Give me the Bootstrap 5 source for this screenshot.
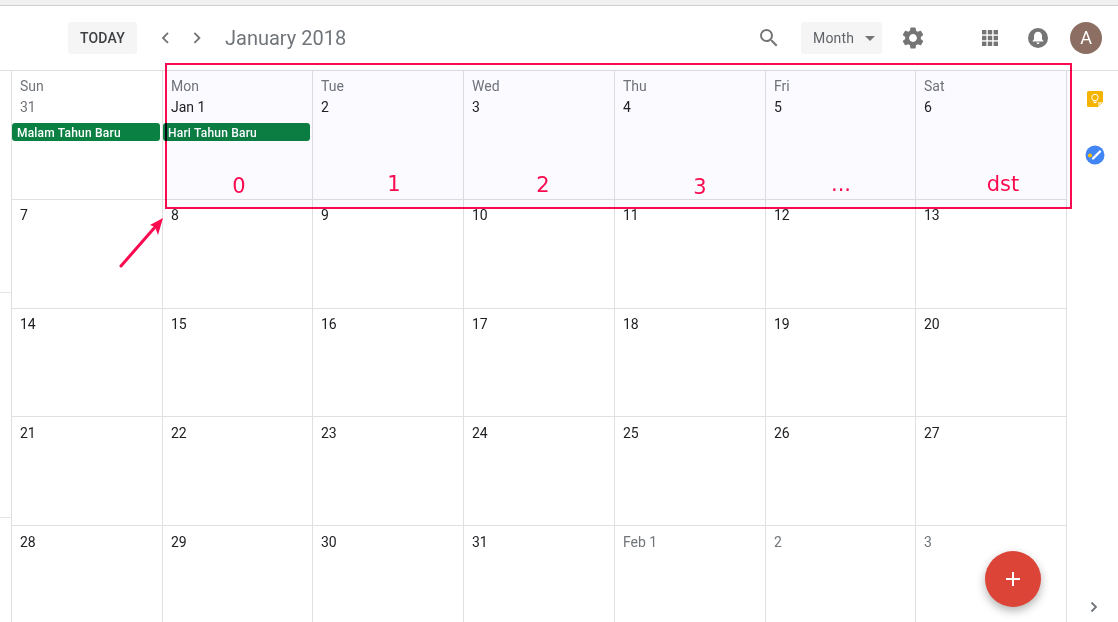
<!DOCTYPE html>
<html lang="en">
<head>
<meta charset="utf-8">
<title>January 2018</title>
<link href="https://cdn.jsdelivr.net/npm/bootstrap@5.3.0/dist/css/bootstrap.min.css" rel="stylesheet">
<style>
html,body{height:622px;overflow:hidden;background:#fff}
body{font-family:Roboto,"Liberation Sans",sans-serif;font-size:14px;color:#3c4043;position:relative}
.top-strip{height:6px;background:#f1f1f1;border-bottom:1px solid #cfcfcf}
.app-head{height:65px;border-bottom:1px solid #e0e0e0;padding-left:68px;padding-right:16px}
.pill-btn{height:32px;background:#f5f5f5;border:0;border-radius:3px;color:#3c4043;font-size:14px;padding:0;line-height:32px}
.today-btn{width:69px;font-weight:500;letter-spacing:.2px}
.month-btn{width:81px;color:#5f6368;letter-spacing:.2px;padding-left:12px;margin-left:20px}
.caret-down{width:0;height:0;border-left:5px solid transparent;border-right:5px solid transparent;border-top:5px solid #757575;margin-left:11px;margin-top:1px}
.chev-row{margin-left:12px}
.chev-slot{width:32px;height:32px}
.title-text{font-size:20px;color:#70757a;margin-left:12px}
.ico{width:24px;height:24px;fill:#757575;display:block}
.gear-slot{margin-left:19px}
.apps-slot{margin-left:53px}
.bell-slot{margin-left:24px}
.avatar-dot{width:32px;height:32px;border-radius:50%;background:#8d6e63;color:#fff;font-size:18px;line-height:32px;text-align:center;margin-left:20px}
.main-zone{height:551px}
.left-rail{width:12px;flex:none;border-right:1px solid #e0e0e0}
.rail-top{height:222px;border-bottom:1px solid #e5e5e5}
.rail-seg{height:225px;border-bottom:1px solid #e5e5e5}
.cal-grid{display:grid;grid-template-columns:151px 150px 151px 151px 151px 150px 151px;grid-template-rows:129px 109px 108px 109px 110px;width:1055px;flex:none}
.day-cell{border-right:1px solid #e0e0e0;border-bottom:1px solid #e0e0e0;padding:6px 0 0 8px;color:#202124;line-height:20px;margin-left:-1px;padding-left:9px}
.day-cell.no-left{margin-left:0;padding-left:8px}
.week-row{padding-top:5px}
.week-low{padding-top:6px}
.wday{color:#70757a;height:20px;line-height:18px}
.date-line{line-height:20px}
.muted-date{color:#70757a}
.ev-chip{height:18px;background:#0b8043;color:#fff;font-size:12px;font-weight:500;border-radius:3px;line-height:20px;padding-left:5px;margin:6px 2px 0 -8px;letter-spacing:.2px}
.right-rail{flex:1 1 auto;position:relative}
.keep-ico{position:absolute;left:20px;top:20px}
.tasks-ico{position:absolute;left:18px;top:74px}
.rail-chev{position:absolute;left:21px;top:530px}
.mark-box{position:absolute;left:165px;top:63px;width:907px;height:146px;border:2px solid #fb0a4f;background:linear-gradient(#fbfaff,#fbfaff) no-repeat 0 5px;color:#fb0a4f;font-family:"DejaVu Sans",sans-serif;font-size:21px;line-height:28px;mix-blend-mode:multiply}
.mark-lbl{position:absolute;transform:translateX(-50%)}
.lb0{left:72px;top:107px}
.lb1{left:227px;top:105px}
.lb2{left:376px;top:106px}
.lb3{left:533px;top:108px}
.lb4{left:674px;top:105px}
.lb5{left:836px;top:105px}
.mark-arrow{position:absolute;left:115px;top:212px}
.fab-add{position:absolute;left:985px;top:551px;width:56px;height:56px;border-radius:50%;background:#db4437;border:0;padding:0;box-shadow:0 4px 10px rgba(0,0,0,.3)}
</style>
</head>
<body>
<div class="top-strip"></div>
<header class="app-head d-flex align-items-center">
  <button class="pill-btn today-btn" type="button">TODAY</button>
  <div class="d-flex chev-row">
    <span class="chev-slot d-flex align-items-center justify-content-center"><svg width="24" height="24" viewBox="0 0 24 24" style="display:block"><path d="M15.4 7.4 14 6l-6 6 6 6 1.4-1.4-4.6-4.6z" fill="#757575" transform="translate(0.5 0) scale(.94) translate(.7 .7)"/></svg></span>
    <span class="chev-slot d-flex align-items-center justify-content-center"><svg width="24" height="24" viewBox="0 0 24 24" style="display:block"><path d="M10 6 8.6 7.4l4.6 4.6-4.6 4.6L10 18l6-6z" fill="#757575" transform="scale(.94) translate(.7 .7)"/></svg></span>
  </div>
  <span class="title-text">January 2018</span>
  <div class="d-flex align-items-center ms-auto">
    <svg class="ico" viewBox="0 0 24 24"><path d="M15.5 14h-.79l-.28-.27A6.471 6.471 0 0 0 16 9.5 6.5 6.5 0 1 0 9.5 16c1.61 0 3.09-.59 4.23-1.57l.27.28v.79l5 4.99L20.49 19l-4.99-5zm-6 0C7.01 14 5 11.99 5 9.5S7.01 5 9.5 5 14 7.01 14 9.5 11.99 14 9.5 14z"/></svg>
    <button class="pill-btn month-btn d-flex align-items-center" type="button">Month<span class="caret-down"></span></button>
    <svg class="ico gear-slot" viewBox="1 1 22 22"><path d="M19.14 12.94c.04-.3.06-.61.06-.94 0-.32-.02-.64-.07-.94l2.03-1.58c.18-.14.23-.41.12-.61l-1.92-3.32c-.12-.22-.37-.29-.59-.22l-2.39.96c-.5-.38-1.03-.7-1.62-.94l-.36-2.54c-.04-.24-.24-.41-.48-.41h-3.84c-.24 0-.43.17-.47.41l-.36 2.54c-.59.24-1.13.57-1.62.94l-2.39-.96c-.22-.08-.47 0-.59.22L2.74 8.87c-.12.21-.08.47.12.61l2.03 1.58c-.05.3-.09.63-.09.94s.02.64.07.94l-2.03 1.58c-.18.14-.23.41-.12.61l1.92 3.32c.12.22.37.29.59.22l2.39-.96c.5.38 1.03.7 1.62.94l.36 2.54c.05.24.24.41.48.41h3.84c.24 0 .44-.17.47-.41l.36-2.54c.59-.24 1.13-.56 1.62-.94l2.39.96c.22.08.47 0 .59-.22l1.92-3.32c.12-.22.07-.47-.12-.61l-2.01-1.58zM12 15.6c-1.98 0-3.6-1.62-3.6-3.6s1.62-3.6 3.6-3.6 3.6 1.62 3.6 3.6-1.62 3.6-3.6 3.6z"/></svg>
    <svg class="ico apps-slot" viewBox="0 0 24 24"><g><rect x="4" y="4" width="4.4" height="4.4"/><rect x="9.8" y="4" width="4.4" height="4.4"/><rect x="15.6" y="4" width="4.4" height="4.4"/><rect x="4" y="9.8" width="4.4" height="4.4"/><rect x="9.8" y="9.8" width="4.4" height="4.4"/><rect x="15.6" y="9.8" width="4.4" height="4.4"/><rect x="4" y="15.6" width="4.4" height="4.4"/><rect x="9.8" y="15.6" width="4.4" height="4.4"/><rect x="15.6" y="15.6" width="4.4" height="4.4"/></g></svg>
    <svg class="ico bell-slot" viewBox="0 0 24 24"><circle cx="12" cy="12" r="10"/><path fill="#fff" d="M12 5.800c-2.400 0-4 1.900-4 4.200v3.300l-1.300 1.400v.7h10.600v-.7L16 13.300V10c0-2.300-1.600-4.200-4-4.200zM10.500 16.600a1.500 1.500 0 0 0 3 0z"/></svg>
    <div class="avatar-dot">A</div>
  </div>
</header>
<main class="main-zone d-flex">
  <div class="left-rail"><div class="rail-top"></div><div class="rail-seg"></div></div>
  <div class="cal-grid">
    <div class="day-cell no-left"><div class="wday">Sun</div><div class="date-line muted-date">31</div><div class="ev-chip">Malam Tahun Baru</div></div>
    <div class="day-cell"><div class="wday">Mon</div><div class="date-line">Jan 1</div><div class="ev-chip">Hari Tahun Baru</div></div>
    <div class="day-cell"><div class="wday">Tue</div><div class="date-line">2</div></div>
    <div class="day-cell"><div class="wday">Wed</div><div class="date-line">3</div></div>
    <div class="day-cell"><div class="wday">Thu</div><div class="date-line">4</div></div>
    <div class="day-cell"><div class="wday">Fri</div><div class="date-line">5</div></div>
    <div class="day-cell"><div class="wday">Sat</div><div class="date-line">6</div></div>

    <div class="day-cell no-left week-row">7</div><div class="day-cell week-row">8</div><div class="day-cell week-row">9</div><div class="day-cell week-row">10</div><div class="day-cell week-row">11</div><div class="day-cell week-row">12</div><div class="day-cell week-row">13</div>
    <div class="day-cell no-left week-row">14</div><div class="day-cell week-row">15</div><div class="day-cell week-row">16</div><div class="day-cell week-row">17</div><div class="day-cell week-row">18</div><div class="day-cell week-row">19</div><div class="day-cell week-row">20</div>
    <div class="day-cell no-left week-low">21</div><div class="day-cell week-low">22</div><div class="day-cell week-low">23</div><div class="day-cell week-low">24</div><div class="day-cell week-low">25</div><div class="day-cell week-low">26</div><div class="day-cell week-low">27</div>
    <div class="day-cell no-left week-low">28</div><div class="day-cell week-low">29</div><div class="day-cell week-low">30</div><div class="day-cell week-low">31</div><div class="day-cell week-low muted-date">Feb 1</div><div class="day-cell week-low muted-date">2</div><div class="day-cell week-low muted-date">3</div>
  </div>
  <aside class="right-rail">
    <svg class="keep-ico" width="16" height="16" viewBox="0 0 16 16"><path d="M1.500 0h13A1.500 1.500 0 0 1 16 1.500V11l-5 5H1.500A1.500 1.500 0 0 1 0 14.500v-13A1.500 1.500 0 0 1 1.500 0z" fill="#f4b400"/><path d="M16 11h-5v5z" fill="#fbe29a"/><circle cx="8" cy="6.500" r="3.200" fill="none" stroke="#fff" stroke-width="1"/><path d="M6.600 11.500h2.800" stroke="#fff" stroke-width="1.200"/><path d="M6.900 9.500v1M9.100 9.500v1" stroke="#fff"/></svg>
    <svg class="tasks-ico" width="20" height="20" viewBox="0 0 20 20"><circle cx="10" cy="10" r="9.500" fill="#4285f4"/><path d="M8 13.500 15 6.500" stroke="#fff" stroke-width="2.400" stroke-linecap="round"/><circle cx="5" cy="10.500" r="2.100" fill="#fbbc04"/></svg>
    <svg class="rail-chev" width="12" height="12" viewBox="0 0 12 12"><path d="M3.500 1.500 8 6l-4.500 4.500" fill="none" stroke="#70757a" stroke-width="1.800"/></svg>
  </aside>
</main>
<div class="mark-box">
  <span class="mark-lbl lb0">0</span><span class="mark-lbl lb1">1</span><span class="mark-lbl lb2">2</span><span class="mark-lbl lb3">3</span><span class="mark-lbl lb4">...</span><span class="mark-lbl lb5">dst</span>
</div>
<svg class="mark-arrow" width="52" height="60" viewBox="0 0 52 60"><path d="M6 54 41 14" stroke="#fb0a4f" stroke-width="3" stroke-linecap="round" fill="none"/><path d="M48 6 35 13 40 15 43 23z" fill="#fb0a4f"/></svg>
<button class="fab-add d-flex align-items-center justify-content-center" type="button" aria-label="Add"><svg width="16" height="16" viewBox="0 0 16 16"><path d="M1 8h14M8 1v14" stroke="#fff" stroke-width="2"/></svg></button>
</body>
</html>
